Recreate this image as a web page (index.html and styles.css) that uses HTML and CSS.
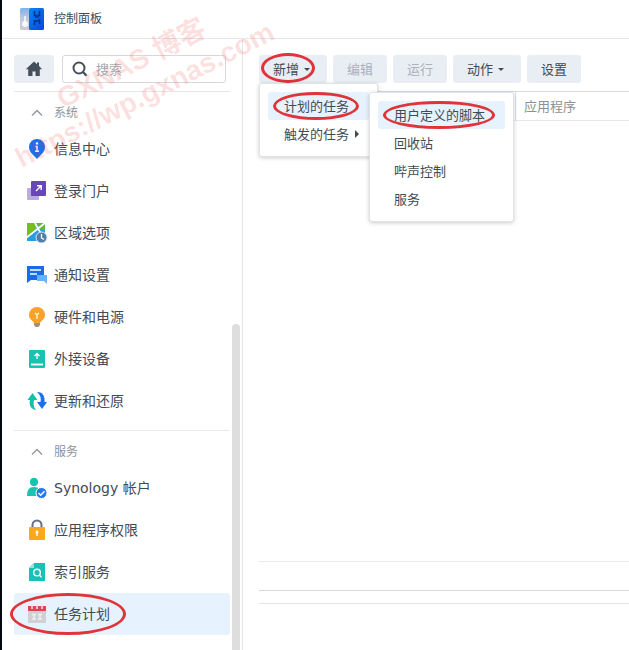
FILE: index.html
```html
<!DOCTYPE html>
<html lang="zh-CN">
<head>
<meta charset="utf-8">
<title>控制面板</title>
<link rel="stylesheet" href="styles.css">
</head>
<body>
<div class="window">
  <header class="titlebar">
    <svg class="logo" width="24" height="22" viewBox="0 0 24 22">
      <defs>
        <linearGradient id="lg" x1="0" y1="0" x2="0" y2="1"><stop offset="0" stop-color="#78b4f0"/><stop offset=".5" stop-color="#c3cbdb"/><stop offset="1" stop-color="#c9ccd6"/></linearGradient>
        <linearGradient id="lb" x1="0" y1="0" x2="1" y2="1"><stop offset="0" stop-color="#0a86f5"/><stop offset="1" stop-color="#0648d8"/></linearGradient>
      </defs>
      <rect width="10" height="22" rx="1.500" fill="url(#lg)"/>
      <rect x="9" width="15" height="22" rx="1.500" fill="url(#lb)"/>
      <circle cx="5" cy="16" r="3" fill="#f7f8fb"/><path d="M5 8v6" stroke="#f7f8fb" stroke-width="1.600"/>
      <path d="M14.500 3v4.500h1.500v2.500M19.500 3v4.500H18v2.500M14.500 12v5M19.500 11v5M14.500 13h5" stroke="#0a2f86" stroke-width="1.500" fill="none"/>
    </svg>
    <h1 class="title">控制面板</h1>
  </header>
  <div class="body">
    <aside class="sidebar">
      <div class="tools">
        <button class="btn home" aria-label="主页"><svg width="18" height="16" viewBox="0 0 18 16"><path d="M9 0.500 0.800 8.300h2.400V15h4.300v-4.500h3V15h4.300V8.300h2.400L14 5V1.500h-2v1.800z" fill="#46505c"/></svg></button>
        <label class="search"><svg width="16" height="16" viewBox="0 0 16 16"><circle cx="7" cy="7" r="5.500" fill="none" stroke="#46505c" stroke-width="2"/><path d="m11 11 3.500 3.700" stroke="#46505c" stroke-width="2.400"/></svg><input type="text" placeholder="搜索" aria-label="搜索"></label>
      </div>
      <nav class="nav">
        <button class="group"><svg width="12" height="8" viewBox="0 0 12 8"><path d="m1 6.500 5-5 5 5" fill="none" stroke="#959ba1" stroke-width="1.500"/></svg>系统</button>
        <a class="item" href="#"><svg width="22" height="22" viewBox="0 0 22 22"><path d="M11 1a8 8 0 0 1 8 8c0 5-4.500 8-8 12-3.500-4-8-7-8-12a8 8 0 0 1 8-8z" fill="#1b70ef"/><circle cx="11" cy="5.500" r="1.200" fill="#fff"/><path d="M9.500 8.500H11V13M9 13.300h4" stroke="#fff" stroke-width="1.400" fill="none"/></svg>信息中心</a>
        <a class="item" href="#"><svg width="22" height="22" viewBox="0 0 22 22"><rect x="1" y="8" width="12" height="12" rx="1" fill="#b9abe6"/><path d="M5 8h8v8H5z" fill="#8272ca"/><rect x="5" y="1" width="15" height="15" rx="1" fill="#6845bb"/><path d="m10 11 5-5M11 5.800h4.200V10" stroke="#fff" stroke-width="1.400" fill="none"/></svg>登录门户</a>
        <a class="item" href="#"><svg width="22" height="22" viewBox="0 0 22 22"><path d="M1 1h18v18H1z" fill="#279ddd"/><path d="M1 1h8l2 5-10 9z" fill="#76bd22"/><path d="M11 1h8v7h-5z" fill="#65b832"/><path d="M0 16 19 1M9 1l5 9 4 8" stroke="#fff" stroke-width="1.700" fill="none"/><circle cx="15.500" cy="15.500" r="5.500" fill="#527da8" stroke="#e5eef6"/><path d="M15.500 12v4l2.500 1.500" stroke="#fff" stroke-width="1.300" fill="none"/></svg>区域选项</a>
        <a class="item" href="#"><svg width="22" height="22" viewBox="0 0 22 22"><path d="M1 2h17v14H5l-4 3z" fill="#176de8"/><path d="M4 6h11M4 10h7" stroke="#fff" stroke-width="1.500"/><path d="M11 11h10v9l-3-3h-7z" fill="#65b4fb"/></svg>通知设置</a>
        <a class="item" href="#"><svg width="22" height="22" viewBox="0 0 22 22"><path d="M11 1a8 8 0 0 0-8 8c0 3 1.500 4.500 3.500 6L8 17h6l1.500-2C17.500 13.500 19 12 19 9a8 8 0 0 0-8-8z" fill="#f8a12d"/><path d="M8 17h6v2l-1.500 2h-3L8 19z" fill="#9b9388"/><path d="m9 7 2 1.500L13 7M11 8.500V13" stroke="#fff0c2" stroke-width="1.500" fill="none"/></svg>硬件和电源</a>
        <a class="item" href="#"><svg width="22" height="22" viewBox="0 0 22 22"><rect x="3" y="2" width="16" height="18" rx="1" fill="#19c3b2"/><path d="M11 11V5.500M8.500 8 11 5.500 13.500 8" stroke="#fff" stroke-width="1.300" fill="none"/><path d="M5 16.500h12" stroke="#fff" stroke-width="1.800"/></svg>外接设备</a>
        <a class="item" href="#"><svg width="22" height="22" viewBox="0 0 22 22"><path d="M10 20C4 19 3 14 4 10H1.500l5-7 5 7H8c-.800 4-.500 7 2 10z" fill="#12bfa9"/><path d="M11 2c6.500 0 8 5 7.500 10H21l-5 7-5-7h3.500c.800-4 0-7-3.500-10z" fill="#1672ed"/></svg>更新和还原</a>
        <hr class="split">
        <button class="group"><svg width="12" height="8" viewBox="0 0 12 8"><path d="m1 6.500 5-5 5 5" fill="none" stroke="#959ba1" stroke-width="1.500"/></svg>服务</button>
        <a class="item latin" href="#"><svg width="22" height="22" viewBox="0 0 22 22"><circle cx="8" cy="5" r="4.200" fill="#17c4b0"/><path d="M1 19c0-6 2-9 7-9s7 3 7 9z" fill="#17c4b0"/><circle cx="15.500" cy="16" r="5.500" fill="#2876e8" stroke="#fff"/><path d="m12.500 16 2.200 2.200 3.800-4" stroke="#fff" stroke-width="1.500" fill="none"/></svg>Synology 帐户</a>
        <a class="item" href="#"><svg width="22" height="22" viewBox="0 0 22 22"><path d="M6.500 9V6a4.500 4.500 0 0 1 9 0v3" stroke="#5f7184" stroke-width="2" fill="none"/><rect x="3" y="8" width="16" height="13" rx="1" fill="#fba81f"/><circle cx="11" cy="13" r="1.500" fill="#fff"/><path d="M11 13v4" stroke="#fff" stroke-width="1.500"/></svg>应用程序权限</a>
        <a class="item" href="#"><svg width="22" height="22" viewBox="0 0 22 22"><path d="M8 2h11v18H3V7z" fill="#18c1b5"/><path d="M3 7h5V2z" fill="#92e4dd"/><circle cx="11" cy="11.500" r="3.300" stroke="#fff" stroke-width="1.400" fill="none"/><path d="m13.300 14 2.200 2.300" stroke="#fff" stroke-width="1.500"/></svg>索引服务</a>
        <a class="item active marked" href="#"><svg width="22" height="22" viewBox="0 0 22 22"><path d="M2 7h18v13H2z" fill="#d0d1d5"/><path d="M2 3h18v5H2z" fill="#d94750"/><path d="M6 1v5M11 1v5M16 1v5" stroke="#f3e4e7" stroke-width="1.500"/><path d="M6 11.500h4M12 11.500h4M6 16h4M12 16h4M8 11v5M14 11v5" stroke="#eeeef1" stroke-width="1.500"/></svg>任务计划</a>
      </nav>
      <div class="scroll"></div>
    </aside>
    <main class="content">
      <div class="toolbar">
        <div class="dropdown">
          <button class="btn marked">新增<i class="caret"></i></button>
          <div class="menu">
            <button class="option current marked">计划的任务</button>
            <button class="option">触发的任务<i class="arrow"></i></button>
          </div>
          <div class="menu submenu">
            <button class="option current marked">用户定义的脚本</button>
            <button class="option">回收站</button>
            <button class="option">哔声控制</button>
            <button class="option">服务</button>
          </div>
        </div>
        <button class="btn" disabled>编辑</button>
        <button class="btn" disabled>运行</button>
        <button class="btn">动作<i class="caret"></i></button>
        <button class="btn">设置</button>
      </div>
      <table class="tasks"><thead><tr><th class="name"></th><th>应用程序</th></tr></thead></table>
      <div class="empty"></div>
      <div class="pager"></div>
      <div class="footer"></div>
    </main>
  </div>
  <div class="watermark"><span class="brand">GXNAS 博客</span><span>https://wp.gxnas.com</span></div>
</div>
</body>
</html>
```
FILE: styles.css
```css
* { box-sizing: border-box; }
body {
  margin: 0;
  color: #414b55;
  background: #fff;
  font: 13px/20px "Noto Sans", "Noto Sans CJK SC", sans-serif;
}
button, input { font: inherit; color: inherit; }
button { border: 0; background: none; padding: 0; }
svg { flex: none; }
.window {
  position: relative;
  display: flex;
  flex-direction: column;
  min-height: 100vh;
  border-left: 2px solid #05080d;
  overflow: hidden;
}
.titlebar {
  display: flex;
  align-items: center;
  gap: 10px;
  height: 39px;
  padding-left: 18px;
  border-bottom: 1px solid #e4e7eb;
}
.title { margin: 0; font-size: 12px; font-weight: 400; }
.body { flex: 1; display: flex; }
.sidebar {
  position: relative;
  flex: 0 0 241px;
  padding: 16px 12px 15px;
  border-right: 1px solid #e4e6e9;
}
.tools {
  display: flex;
  gap: 8px;
  padding-bottom: 8px;
  margin-right: 4px;
}
.btn {
  display: flex;
  align-items: center;
  justify-content: center;
  height: 28px;
  padding: 0 14px;
  border-radius: 3px;
  background: #e9eef5;
}
.btn:disabled { color: #aab1bd; }
.home { width: 40px; padding: 0; }
.search {
  flex: 1;
  display: flex;
  align-items: center;
  gap: 8px;
  min-width: 0;
  padding: 0 9px;
  border: 1px solid #d5d9de;
  border-radius: 3px;
}
.search input {
  width: 100%;
  min-width: 0;
  padding: 0;
  border: 0;
  outline: 0;
  background: none;
}
.search input::placeholder { color: #a6abb1; }
.nav { border-top: 1px solid #e4e7ea; }
.group {
  display: flex;
  align-items: center;
  gap: 11px;
  height: 36px;
  padding: 6px 0 0 17px;
  font-size: 12px;
  color: #8e9499;
}
.item {
  position: relative;
  display: flex;
  align-items: center;
  gap: 6px;
  height: 42px;
  padding-left: 12px;
  border-radius: 3px;
  font-size: 14px;
  color: inherit;
  text-decoration: none;
}
.latin { font-family: "DejaVu Sans", "Noto Sans CJK SC", sans-serif; }
.active { background: #e6f2fd; }
.split { margin: 8px 0 0; border: 0; border-top: 1px solid #e9ebed; }
.scroll {
  position: absolute;
  top: 285px;
  right: 2px;
  bottom: 0;
  width: 8px;
  border-radius: 4px 4px 0 0;
  background: #dedede;
}
.content {
  flex: 1;
  display: flex;
  flex-direction: column;
  min-width: 0;
  padding: 16px 0 0 16px;
}
.toolbar { display: flex; gap: 6px; margin-bottom: 8px; }
.dropdown { position: relative; }
.caret {
  margin: 0 3px 0 5px;
  border: 3px solid transparent;
  border-top-color: currentColor;
  border-bottom: 0;
}
.arrow {
  margin-left: 6px;
  border: 4px solid transparent;
  border-left: 4px solid currentColor;
  border-right: 0;
}
.menu {
  position: absolute;
  z-index: 1;
  top: 28px;
  left: 0;
  width: 119px;
  padding: 8px;
  border: 1px solid #e0e3e7;
  border-radius: 3px;
  background: #fff;
  box-shadow: 0 1px 4px #0003;
  white-space: nowrap;
}
.submenu { z-index: 2; top: 37px; left: 110px; width: 145px; }
.option {
  position: relative;
  display: flex;
  align-items: center;
  width: 100%;
  height: 28px;
  padding-left: 16px;
}
.current { border-radius: 3px; background: #e6f2fd; }
.marked { position: relative; }
.marked::after {
  content: "";
  position: absolute;
  inset: -2px 12px 0 2px;
  border: 3px solid #e0343b;
  border-radius: 50%;
}
.menu .marked::after { inset: 0 10px 0 5px; }
.item.marked::after { inset: 0 104px 0 -4px; }
.tasks {
  width: 100%;
  height: 30px;
  table-layout: fixed;
  border-collapse: separate;
  border-spacing: 0;
  border-top: 1px solid #d9dce0;
  border-bottom: 1px solid #e5e7ea;
}
.tasks th {
  padding: 0 8px;
  font-weight: 400;
  text-align: left;
  color: #8c9196;
}
.tasks .name { width: 257px; border-right: 1px solid #dfe2e5; }
.empty { flex: 1; min-height: 200px; border-bottom: 1px solid #ececec; }
.pager { height: 29px; border-bottom: 1px solid #d9d9d9; }
.footer { height: 59px; padding-top: 12px; }
.footer::before { content: ""; display: block; border-top: 1px solid #e5e5e5; }
.watermark {
  position: absolute;
  z-index: 3;
  top: 46px;
  left: -8px;
  display: flex;
  flex-direction: column;
  color: rgb(240 60 60 / 16%);
  font: bold 28px/34px "Liberation Sans", "Noto Sans CJK SC", sans-serif;
  white-space: nowrap;
  transform: rotate(-27deg);
  pointer-events: none;
}
.brand { padding-left: 64px; }
```
